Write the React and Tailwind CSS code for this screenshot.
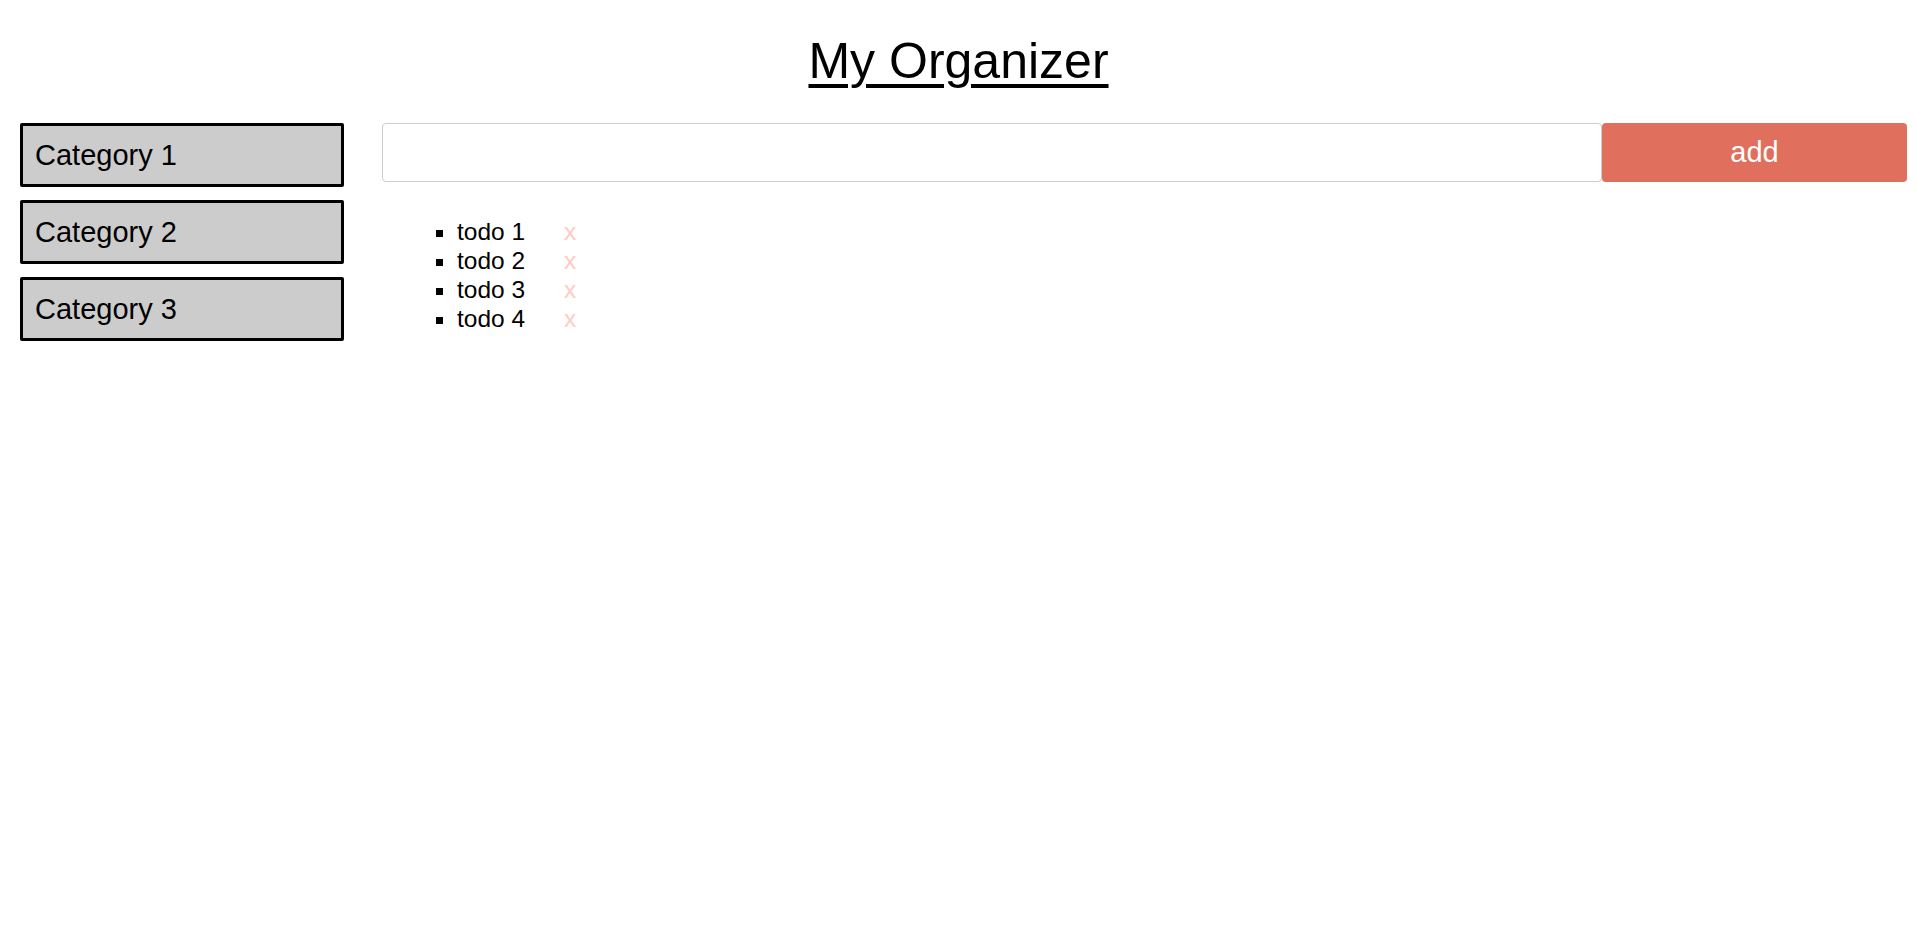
import React from "react";

const categories = ["Category 1", "Category 2", "Category 3"];
const todos = ["todo 1", "todo 2", "todo 3", "todo 4"];

const App = () => {
    return (
        <div className="min-h-screen bg-white text-black pt-[34px] font-['Liberation_Sans',Arial,sans-serif]">
            <h1 className="text-center text-[50px] leading-[55px] underline decoration-[4px] underline-offset-[6px]">
                My Organizer
            </h1>

            <div className="flex mt-[34px] pl-[20px] pr-[10px]">
                <div className="w-[324px] flex flex-col gap-[13px]">
                    {categories.map((cat) => (
                        <div
                            key={cat}
                            className="h-[64px] flex items-center pl-[12px] pt-[2px] bg-[#cccccc] border-[3px] border-black rounded-[2px] text-[29px]"
                        >
                            {cat}
                        </div>
                    ))}
                </div>

                <div className="flex-1 ml-[38px]">
                    <div className="flex">
                        <input
                            type="text"
                            className="flex-1 h-[59px] border border-[#cccccc] rounded-[4px] px-3 text-[24px] focus:outline-none"
                        />
                        <button className="w-[305px] h-[59px] bg-[#e0705d] text-white text-[29px] rounded-[4px]">
                            add
                        </button>
                    </div>

                    <ul className="list-[square] mt-[35px] pl-[75px] text-[24.5px] leading-[29px]">
                        {todos.map((todo) => (
                            <li key={todo}>
                                <span className="inline-block w-[107px]">{todo}</span>
                                <span className="text-[#ffcbc2]">x</span>
                            </li>
                        ))}
                    </ul>
                </div>
            </div>
        </div>
    );
};

export default App;
